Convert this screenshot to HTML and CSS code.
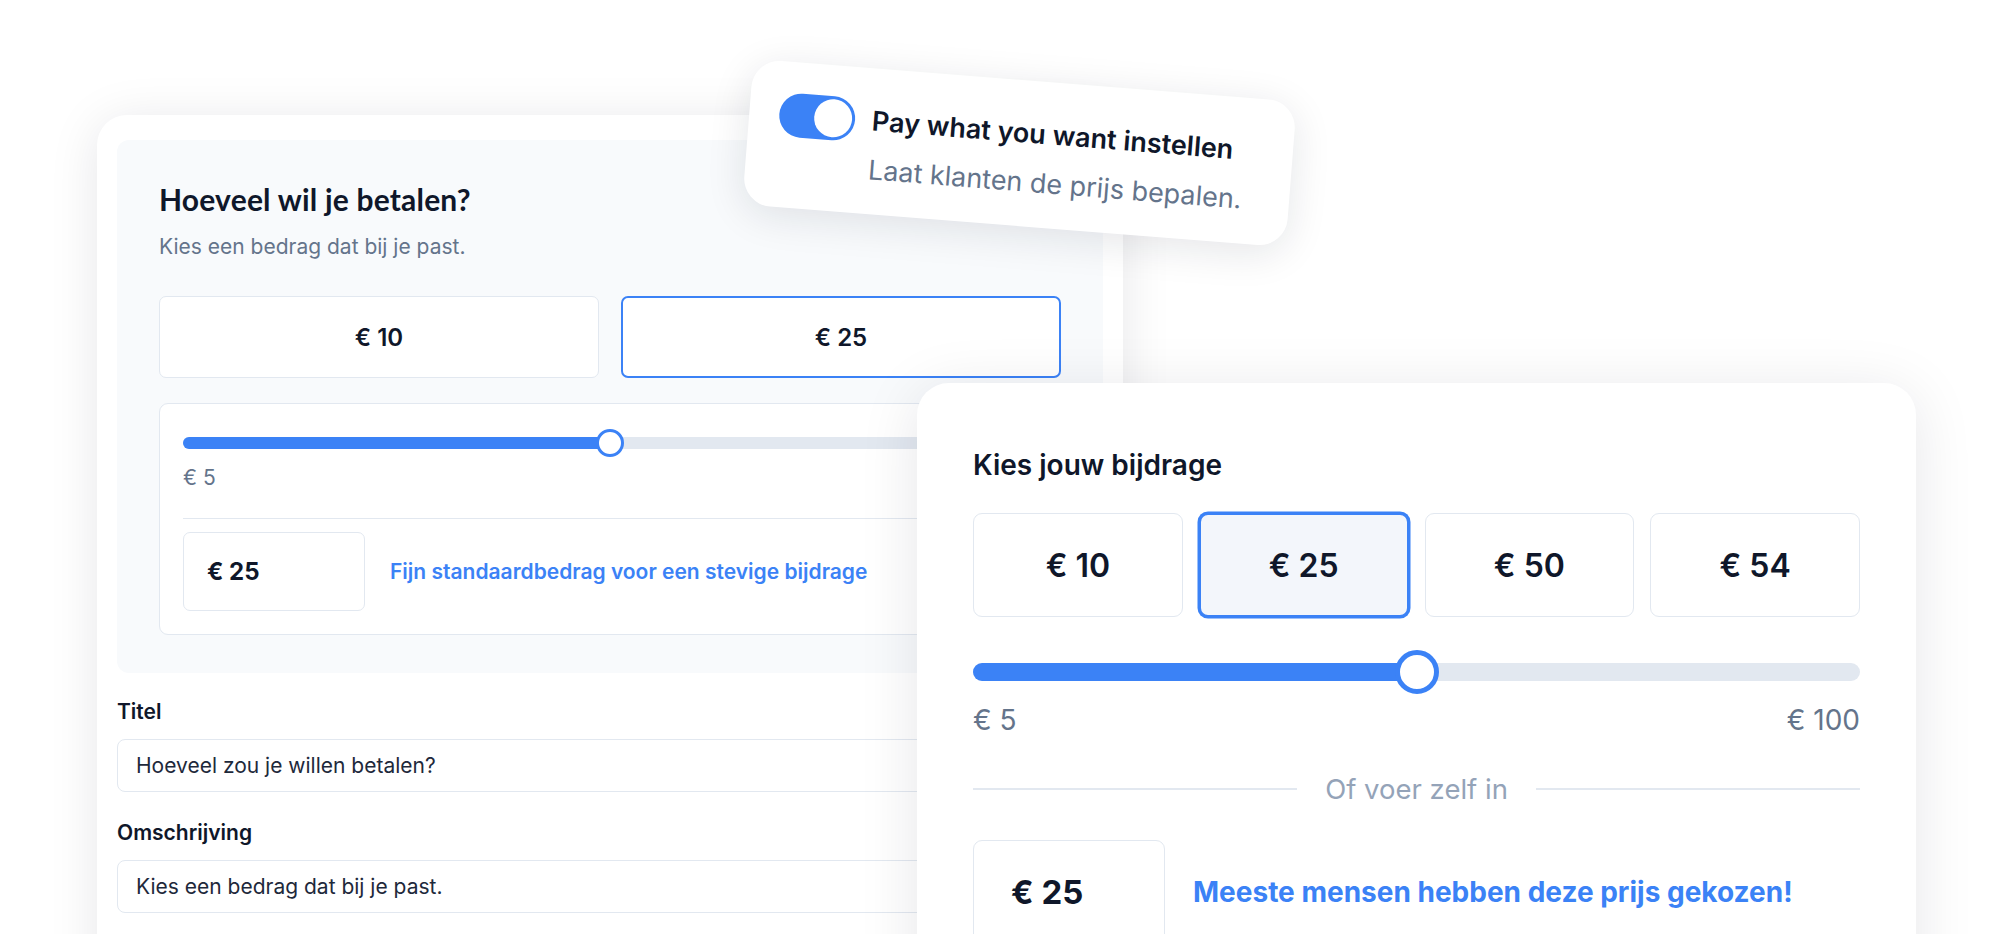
FILE: index.html
```html
<!DOCTYPE html>
<html lang="nl">
<head>
<meta charset="utf-8">
<title>Pay what you want</title>
<link rel="stylesheet" href="styles.css">
</head>
<body>
<div class="stage">
  <section class="card editor">
    <div class="panel">
      <h2 class="panel-title">Hoeveel wil je betalen?</h2>
      <p class="panel-sub">Kies een bedrag dat bij je past.</p>
      <div class="options options-two">
        <div class="opt">€ 10</div>
        <div class="opt opt-sel">€ 25</div>
      </div>
      <div class="slider-box">
        <div class="track track-sm">
          <div class="fill" style="width:50%"></div>
          <span class="thumb thumb-sm" style="left:50%"></span>
        </div>
        <div class="range range-sm"><span>€ 5</span><span>€ 100</span></div>
        <div class="custom custom-sm">
          <div class="amount amount-sm">€ 25</div>
          <span class="hint hint-sm">Fijn standaardbedrag voor een stevige bijdrage</span>
        </div>
      </div>
    </div>
    <div class="field-label">Titel</div>
    <div class="field">Hoeveel zou je willen betalen?</div>
    <div class="field-label field-label-2">Omschrijving</div>
    <div class="field">Kies een bedrag dat bij je past.</div>
  </section>

  <section class="card toggle-card">
    <span class="switch"><span class="knob"></span></span>
    <div class="toggle-text">
      <div class="toggle-title">Pay what you want instellen</div>
      <div class="toggle-sub">Laat klanten de prijs bepalen.</div>
    </div>
  </section>

  <section class="card preview">
    <h3 class="preview-title">Kies jouw bijdrage</h3>
    <div class="options options-four">
      <div class="opt opt-lg">€ 10</div>
      <div class="opt opt-lg opt-sel opt-sel-lg">€ 25</div>
      <div class="opt opt-lg">€ 50</div>
      <div class="opt opt-lg">€ 54</div>
    </div>
    <div class="track track-lg">
      <div class="fill" style="width:50%"></div>
      <span class="thumb thumb-lg" style="left:50%"></span>
    </div>
    <div class="range range-lg"><span>€ 5</span><span>€ 100</span></div>
    <div class="or-line"><span>Of voer zelf in</span></div>
    <div class="custom custom-lg">
      <div class="amount amount-lg">€ 25</div>
      <span class="hint hint-lg">Meeste mensen hebben deze prijs gekozen!</span>
    </div>
  </section>
</div>
</body>
</html>
```

FILE: styles.css
```css
* { box-sizing: border-box; }

html, body {
  margin: 0;
  padding: 0;
  background: #ffffff;
  font-family: Inter, "Noto Sans", "Liberation Sans", sans-serif;
  color: #0f172a;
  overflow: hidden;
}

.stage {
  position: relative;
  width: 2000px;
  height: 934px;
  overflow: hidden;
  background: #ffffff;
}

.card {
  position: absolute;
  background: #ffffff;
}

/* ---------- left editor card ---------- */
.editor {
  left: 97px;
  top: 115px;
  width: 1026px;
  height: 900px;
  padding: 25px 20px 0;
  border-radius: 30px;
  box-shadow: 0 6px 50px rgba(15, 23, 42, 0.10);
  display: flex;
  flex-direction: column;
}

.panel {
  background: #f8fafc;
  border-radius: 12px;
  padding: 42px 42px 38px;
  display: flex;
  flex-direction: column;
}

.panel-title {
  margin: 0;
  font-family: Lato, Inter, sans-serif;
  font-weight: 700;
  font-size: 30px;
  line-height: 34px;
  color: #0f172a;
  letter-spacing: 0.2px;
}

.panel-sub {
  margin: 18px 0 0;
  font-size: 21px;
  line-height: 26px;
  color: #64748b;
}

.options {
  display: grid;
  margin-top: 36px;
}

.options-two {
  grid-template-columns: 1fr 1fr;
  gap: 22px;
  height: 82px;
}

.opt {
  display: flex;
  align-items: center;
  justify-content: center;
  background: #ffffff;
  border: 1px solid #e2e8f0;
  border-radius: 7px;
  font-weight: 600;
  font-size: 24px;
  color: #0f172a;
}

.opt-sel {
  border: 2px solid #3b82f6;
}

.slider-box {
  margin-top: 25px;
  background: #ffffff;
  border: 1px solid #e2e8f0;
  border-radius: 9px;
  padding: 33px 23px 23px;
  display: flex;
  flex-direction: column;
}

.track {
  position: relative;
  background: #e2e8f0;
  border-radius: 999px;
}

.fill {
  height: 100%;
  background: #3b82f6;
  border-radius: 999px 0 0 999px;
}

.thumb {
  position: absolute;
  top: 50%;
  transform: translate(-50%, -50%);
  background: #ffffff;
  border-radius: 50%;
  border-style: solid;
  border-color: #3b82f6;
}

.track-sm { height: 12px; }
.thumb-sm { width: 28px; height: 28px; border-width: 3.5px; }

.range {
  display: flex;
  justify-content: space-between;
  color: #64748b;
}

.range-sm {
  margin-top: 18px;
  font-size: 21px;
  line-height: 22px;
  padding-bottom: 29px;
  border-bottom: 1px solid #e2e8f0;
}

.custom {
  display: flex;
  align-items: center;
}

.custom-sm {
  margin-top: 13px;
  gap: 25px;
}

.amount {
  background: #ffffff;
  border: 1px solid #e2e8f0;
  border-radius: 7px;
  font-weight: 700;
  color: #0f172a;
  display: flex;
  align-items: center;
}

.amount-sm {
  width: 182px;
  height: 79px;
  padding-left: 23px;
  font-size: 24px;
}

.hint {
  color: #3b82f6;
}

.hint-sm {
  font-size: 21px;
  font-weight: 600;
}

.field-label {
  margin-top: 27px;
  font-size: 21px;
  line-height: 24px;
  font-weight: 600;
  color: #0f172a;
}

.field-label-2 { margin-top: 29px; }

.field {
  margin-top: 15px;
  height: 53px;
  border: 1px solid #e2e8f0;
  border-radius: 8px;
  background: #ffffff;
  padding-left: 18px;
  display: flex;
  align-items: center;
  font-size: 21px;
  color: #1e293b;
}

/* ---------- toggle card ---------- */
.toggle-card {
  left: 747px;
  top: 80px;
  width: 545px;
  height: 146px;
  border-radius: 28px;
  padding: 31px 30px;
  transform: rotate(4.5deg);
  box-shadow: 0 8px 40px rgba(15, 23, 42, 0.11);
  display: flex;
  align-items: flex-start;
  gap: 17px;
}

.switch {
  flex: none;
  position: relative;
  width: 76px;
  height: 44px;
  background: #3b82f6;
  border-radius: 999px;
}

.knob {
  position: absolute;
  right: 3px;
  top: 3px;
  width: 38px;
  height: 38px;
  border-radius: 50%;
  background: #ffffff;
}

.toggle-text {
  margin-top: 7px;
  display: flex;
  flex-direction: column;
  white-space: nowrap;
}

.toggle-title {
  font-size: 27px;
  line-height: 30px;
  font-weight: 600;
  color: #0f172a;
}

.toggle-sub {
  margin-top: 19px;
  font-size: 27px;
  line-height: 30px;
  color: #64748b;
}

/* ---------- preview card ---------- */
.preview {
  left: 917px;
  top: 383px;
  width: 999px;
  height: 620px;
  border-radius: 32px;
  padding: 66px 56px 0;
  box-shadow: 0 8px 60px rgba(15, 23, 42, 0.10);
  display: flex;
  flex-direction: column;
}

.preview-title {
  margin: 0;
  font-size: 28px;
  line-height: 32px;
  font-weight: 600;
  color: #0f172a;
}

.options-four {
  margin-top: 32px;
  grid-template-columns: repeat(4, 1fr);
  gap: 16px;
  height: 104px;
}

.opt-lg {
  font-size: 32px;
  font-weight: 600;
  border-radius: 9px;
}

.opt-sel-lg {
  background: #f3f6fb;
  border: 2px solid #3b82f6;
  box-shadow: 0 0 0 1.5px #3b82f6;
}

.track-lg {
  margin-top: 46px;
  height: 18px;
}

.thumb-lg { width: 44px; height: 44px; border-width: 5px; }

.range-lg {
  margin-top: 24px;
  font-size: 28px;
  line-height: 30px;
}

.or-line {
  margin-top: 39px;
  display: flex;
  align-items: center;
  gap: 28px;
  font-size: 27.5px;
  line-height: 30px;
  color: #94a3b8;
}

.or-line::before,
.or-line::after {
  content: "";
  flex: 1;
  height: 2px;
  background: #e2e8f0;
}

.custom-lg {
  margin-top: 36px;
  gap: 28px;
}

.amount-lg {
  width: 192px;
  height: 104px;
  padding-left: 37px;
  font-size: 33px;
  border-radius: 9px;
}

.hint-lg {
  font-size: 28px;
  font-weight: 700;
}
```
